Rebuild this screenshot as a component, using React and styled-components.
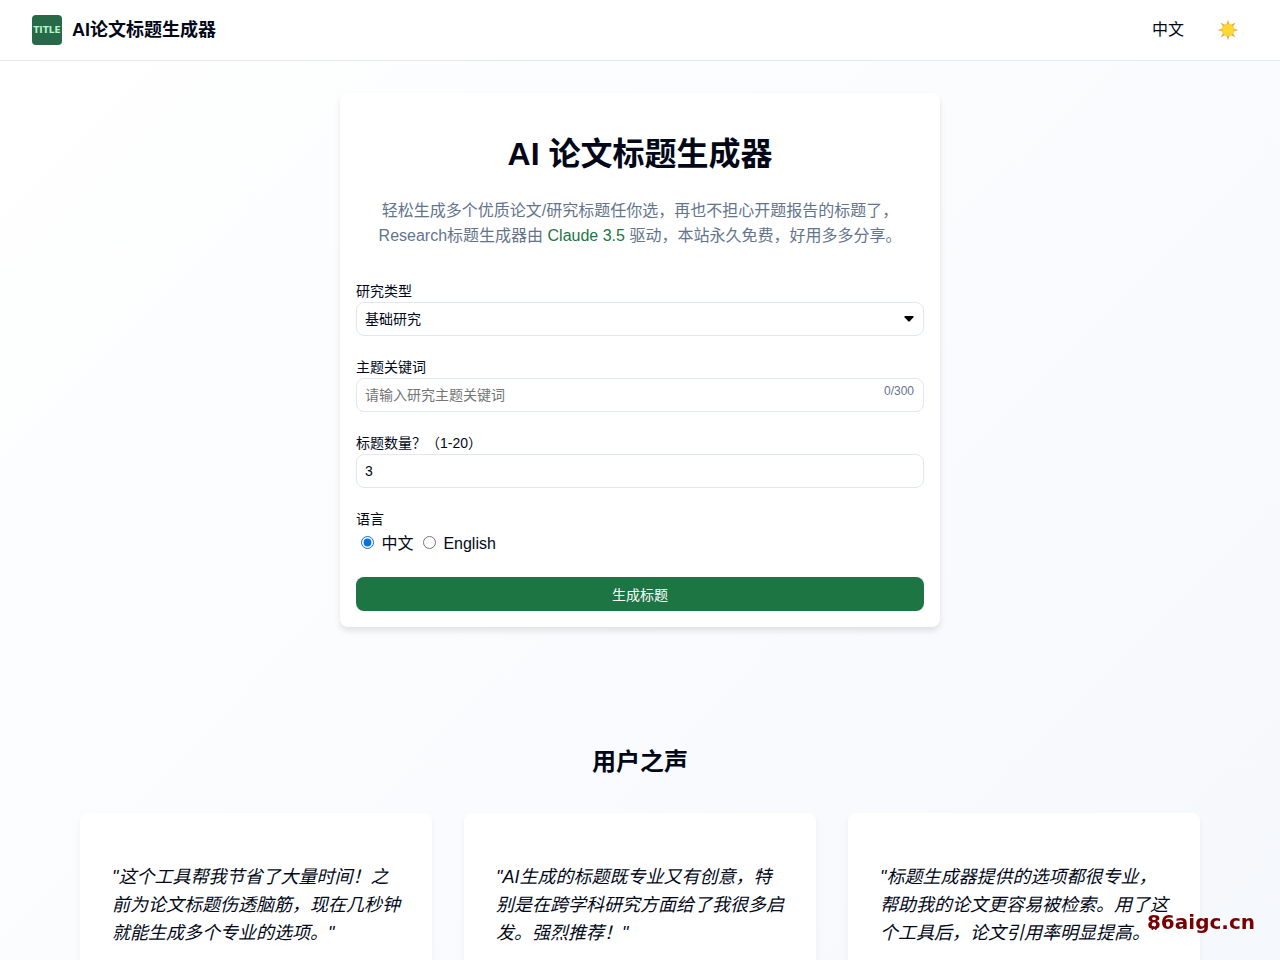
import React, { useState } from "react";
import styled, { createGlobalStyle } from "styled-components";

const GlobalStyle = createGlobalStyle`
  * {
    box-sizing: border-box;
  }

  body {
    margin: 0;
    min-height: 100vh;
    color: #020817;
    background: linear-gradient(135deg, #ffffff, #f5f8fc) fixed;
    font-family: "Liberation Sans", "Noto Sans CJK SC", sans-serif;
    font-size: 16px;
    line-height: 25px;
  }

  button, input, select {
    font-family: inherit;
  }
`;

const Header = styled.header`
  display: flex;
  justify-content: space-between;
  align-items: center;
  height: 61px;
  padding: 0 32px;
  background-color: white;
  border-bottom: 1px solid #e5e7eb;
`;

const Brand = styled.a`
  display: flex;
  align-items: center;
  gap: 10px;
  color: inherit;
  font-size: 18px;
  font-weight: bold;
  text-decoration: none;
`;

const Logo = styled.span`
  display: flex;
  justify-content: center;
  align-items: center;
  width: 30px;
  height: 30px;
  border-radius: 4px;
  color: #b4f5c6;
  background-color: #28694a;
  font-family: "DejaVu Sans", sans-serif;
  font-size: 9px;
`;

const Nav = styled.nav`
  display: flex;
  align-items: center;
  gap: 16px;
`;

const NavButton = styled.button`
  display: flex;
  align-items: center;
  padding: 8px;
  border: none;
  color: inherit;
  background: none;
  font-size: 16px;
  line-height: 24px;
  cursor: pointer;
`;

const Main = styled.main`
  padding: 32px 16px;
`;

const Card = styled.section`
  max-width: 600px;
  margin: 0 auto;
  padding: 16px;
  border-radius: 8px;
  background-color: white;
  box-shadow: 0 4px 6px rgba(0, 0, 0, 0.1);
`;

const Title = styled.h1`
  margin: 21px 0 20px;
  font-size: 32px;
  line-height: 48px;
  text-align: center;
`;

const Description = styled.p`
  margin: 0 0 32px;
  padding: 0 16px;
  color: #64748b;
  text-align: center;

  strong {
    color: #1c7543;
    font-weight: normal;
  }
`;

const Form = styled.form`
  display: flex;
  flex-direction: column;
  gap: 20px;
`;

const Field = styled.div`
  display: flex;
  flex-direction: column;
`;

const Label = styled.label`
  font-size: 14px;
  line-height: 22px;
`;

const Control = styled.div`
  position: relative;
`;

const Input = styled.input`
  display: block;
  appearance: none;
  width: 100%;
  height: 34px;
  padding: 0 8px;
  border: 1px solid #e2e8f0;
  border-radius: 8px;
  color: inherit;
  background-color: white;
  font-size: 14px;
`;

const Caret = styled.svg`
  position: absolute;
  top: 14px;
  right: 10px;
  pointer-events: none;
`;

const Counter = styled.span`
  position: absolute;
  top: 4px;
  right: 10px;
  color: #64748b;
  font-size: 12px;
  line-height: 18px;
`;

const RadioGroup = styled.div`
  line-height: 27px;

  input {
    accent-color: #0b6fdc;
  }
`;

const Submit = styled.button`
  height: 34px;
  border: none;
  border-radius: 8px;
  color: white;
  background-color: #1c7543;
  font-size: 14px;
  cursor: pointer;
`;

const Voices = styled.section`
  max-width: 1120px;
  margin: 0 auto;
  padding: 114px 0 32px;
`;

const SectionTitle = styled.h2`
  margin: 0 0 30px;
  font-size: 24px;
  line-height: 42px;
  text-align: center;
`;

const VoiceGrid = styled.div`
  display: grid;
  grid-template-columns: repeat(auto-fit, minmax(280px, 1fr));
  gap: 32px;
`;

const Voice = styled.blockquote`
  margin: 0;
  padding: 32px;
  border-radius: 8px;
  background-color: white;
  box-shadow: 0 4px 6px rgba(0, 0, 0, 0.05);

  p {
    margin: 18px 0;
    font-size: 18px;
    font-style: italic;
    line-height: 28px;
  }
`;

const Watermark = styled.div`
  position: fixed;
  right: 25px;
  bottom: 24px;
  color: #780000;
  font-family: "DejaVu Sans", sans-serif;
  font-size: 20px;
  font-weight: bold;
  line-height: 28px;
`;

const researchTypes = ["基础研究", "应用研究", "综述研究"];

const voices = [
  "这个工具帮我节省了大量时间！之前为论文标题伤透脑筋，现在几秒钟就能生成多个专业的选项。",
  "AI生成的标题既专业又有创意，特别是在跨学科研究方面给了我很多启发。强烈推荐！",
  "标题生成器提供的选项都很专业，帮助我的论文更容易被检索。用了这个工具后，论文引用率明显提高。",
];

const SunIcon = () => (
  <svg width="24" height="24" viewBox="0 0 24 24" aria-hidden="true">
    <g fill="#f2a93a">
      {[0, 45, 90, 135, 180, 225, 270, 315].map((angle) => (
        <path
          key={angle}
          d="M12 1.4 L13.6 7 H10.4 Z"
          transform={`rotate(${angle} 12 12)`}
        />
      ))}
    </g>
    <circle cx="12" cy="12" r="6" fill="#fdd835" stroke="#f7c433" strokeWidth="0.8" />
  </svg>
);

function Navigation() {
  return (
    <Header>
      <Brand href="/">
        <Logo>TITLE</Logo>
        AI论文标题生成器
      </Brand>
      <Nav>
        <NavButton type="button">中文</NavButton>
        <NavButton type="button" aria-label="切换主题">
          <SunIcon />
        </NavButton>
      </Nav>
    </Header>
  );
}

function TitleForm() {
  const [type, setType] = useState(researchTypes[0]);
  const [keywords, setKeywords] = useState("");
  const [count, setCount] = useState(3);
  const [language, setLanguage] = useState("zh");

  return (
    <Form onSubmit={(e) => e.preventDefault()}>
      <Field>
        <Label htmlFor="type">研究类型</Label>
        <Control>
          <Input as="select" id="type" value={type} onChange={(e) => setType(e.target.value)}>
            {researchTypes.map((item) => (
              <option key={item}>{item}</option>
            ))}
          </Input>
          <Caret width="10" height="6" viewBox="0 0 10 6" aria-hidden="true">
            <path d="M1 0 H9 Q10 .4 9.4 1.2 L5.8 5.2 Q5 6 4.2 5.2 L.6 1.2 Q0 .4 1 0 Z" />
          </Caret>
        </Control>
      </Field>
      <Field>
        <Label htmlFor="keywords">主题关键词</Label>
        <Control>
          <Input
            id="keywords"
            maxLength={300}
            placeholder="请输入研究主题关键词"
            value={keywords}
            onChange={(e) => setKeywords(e.target.value)}
          />
          <Counter>{`${keywords.length}/300`}</Counter>
        </Control>
      </Field>
      <Field>
        <Label htmlFor="count">标题数量？（1-20）</Label>
        <Input
          id="count"
          type="number"
          min="1"
          max="20"
          value={count}
          onChange={(e) => setCount(e.target.value)}
        />
      </Field>
      <Field>
        <Label as="span" id="language">语言</Label>
        <RadioGroup role="radiogroup" aria-labelledby="language">
          <input
            type="radio"
            id="zh"
            name="language"
            checked={language === "zh"}
            onChange={() => setLanguage("zh")}
          />{" "}
          <label htmlFor="zh">中文</label>{" "}
          <input
            type="radio"
            id="en"
            name="language"
            checked={language === "en"}
            onChange={() => setLanguage("en")}
          />{" "}
          <label htmlFor="en">English</label>
        </RadioGroup>
      </Field>
      <Submit type="submit">生成标题</Submit>
    </Form>
  );
}

function App() {
  return (
    <>
      <GlobalStyle />
      <Navigation />
      <Main>
        <Card>
          <Title>AI 论文标题生成器</Title>
          <Description>
            轻松生成多个优质论文/研究标题任你选，再也不担心开题报告的标题了，Research标题生成器由{" "}
            <strong>Claude 3.5</strong> 驱动，本站永久免费，好用多多分享。
          </Description>
          <TitleForm />
        </Card>
        <Voices>
          <SectionTitle>用户之声</SectionTitle>
          <VoiceGrid>
            {voices.map((text) => (
              <Voice key={text}>
                <p>{`"${text}"`}</p>
              </Voice>
            ))}
          </VoiceGrid>
        </Voices>
      </Main>
      <Watermark>86aigc.cn</Watermark>
    </>
  );
}

export default App;
